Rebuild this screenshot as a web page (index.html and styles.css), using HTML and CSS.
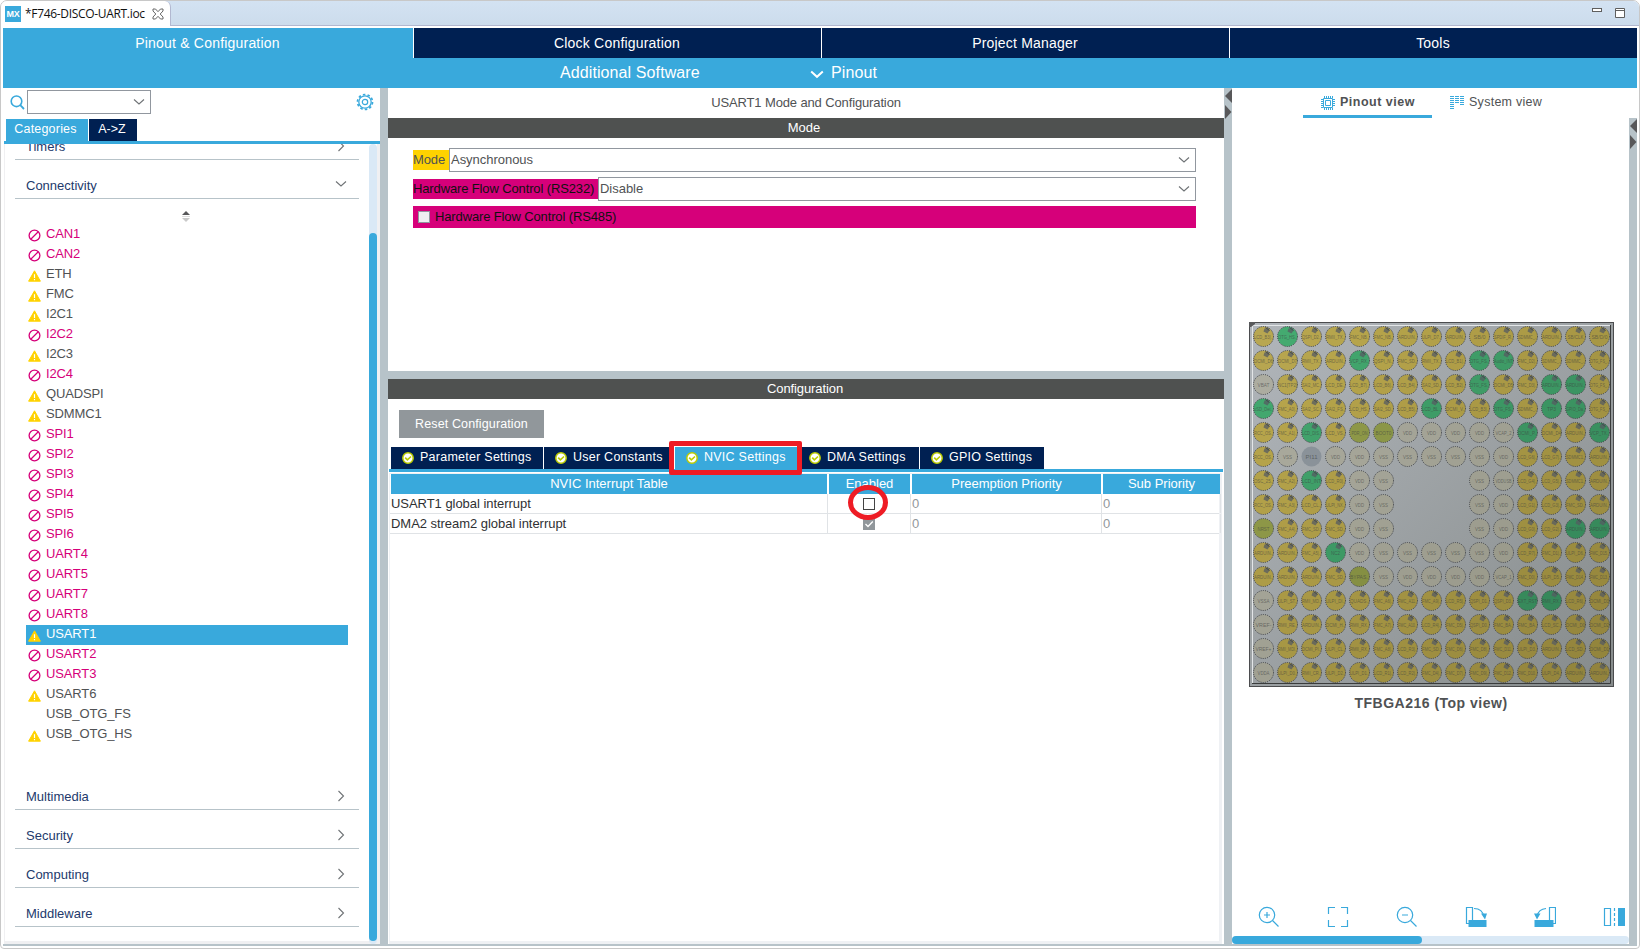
FILE: index.html
```html
<!DOCTYPE html>
<html lang="en">
<head>
<meta charset="utf-8">
<title>F746-DISCO-UART.ioc</title>
<link rel="stylesheet" href="styles.css">
</head>
<body>
<svg class="defs" width="0" height="0">
  <symbol id="ban" viewBox="0 0 13 13"><circle cx="6.500" cy="6.500" r="5.400" fill="none" stroke="#d6007a" stroke-width="1.300"/><path d="M3 10L10 3" stroke="#d6007a" stroke-width="1.200"/></symbol>
  <symbol id="warn" viewBox="0 0 13 12"><path d="M6.500 .8L12.400 11.200H.6Z" fill="#ffd200" stroke="#ffd200" stroke-linejoin="round"/><path d="M6.500 4.200V8M6.500 9V10.300" stroke="#fff" stroke-width="1.200"/></symbol>
  <symbol id="ok" viewBox="0 0 12 12"><circle cx="6" cy="6" r="5.200" fill="#fff" stroke="#bbcc00" stroke-width="1.500"/><path d="M3.200 5.600L5.400 7.900L9 4.500" fill="none" stroke="#bbcc00" stroke-width="1.600"/></symbol>
  <symbol id="down" viewBox="0 0 12 8"><path d="M1 1.500L6 6L11 1.500" fill="none" stroke="#6f7376" stroke-width="1.100"/></symbol>
  <symbol id="right" viewBox="0 0 8 12"><path d="M1.500 1L6.500 6L1.500 11" fill="none" stroke="#6f7376" stroke-width="1.100"/></symbol>
  <symbol id="arrows" viewBox="0 0 8 32"><path d="M8 1V15L1 8Z" fill="#58585a"/><path d="M1 17V31L7.500 24Z" fill="#58585a"/></symbol>
</svg>
<div class="window">
  <header class="strip">
    <div class="file-tab">
      <span class="mx">MX</span><span class="file-name">*F746-DISCO-UART.ioc</span>
      <svg class="close" width="12" height="12" viewBox="0 0 12 12"><path d="M1 1H3.500L6 3.700L8.500 1H11V3L8.200 6L11 9V11H8.500L6 8.300L3.500 11H1V9L3.800 6L1 3Z" fill="#fff" stroke="#666" stroke-width="1"/></svg>
    </div>
    <div class="win-buttons">
      <svg width="10" height="11"><rect x=".5" y=".5" width="9" height="3" fill="#fff" stroke="#5f5f5f"/></svg>
      <svg width="10" height="11"><path d="M.5 .5H9.500V9.500H.5ZM.5 2.500H9.500" fill="#fff" stroke="#5f5f5f"/></svg>
    </div>
  </header>
  <div class="app">
    <nav class="main-tabs"><span class="active">Pinout &amp; Configuration</span><span>Clock Configuration</span><span>Project Manager</span><span>Tools</span></nav>
    <div class="sub-bar">
      <span class="software">Additional Software</span>
      <svg width="14" height="9" viewBox="0 0 14 9"><path d="M1.200 1.500L7 6.800L12.800 1.500" fill="none" stroke="#fff" stroke-width="2"/></svg>
      <span>Pinout</span>
    </div>
    <main class="body">
      <aside class="left">
        <div class="search">
          <svg width="15" height="15" viewBox="0 0 15 15"><circle cx="6.500" cy="6.300" r="5.300" fill="none" stroke="#39a9dc" stroke-width="1.600"/><path d="M10.300 10.200L14 14" stroke="#39a9dc" stroke-width="1.800"/></svg>
          <div class="combo search-box"><svg width="12" height="8"><use href="#down"/></svg></div>
          <svg class="gear" width="18" height="18" viewBox="0 0 18 18"><circle cx="9" cy="9" r="6.200" fill="none" stroke="#39a9dc" stroke-width="1.300"/><circle cx="9" cy="9" r="7.500" fill="none" stroke="#39a9dc" stroke-width="1.700" stroke-dasharray="2.500 2.212"/><circle cx="9" cy="9" r="2.700" fill="none" stroke="#39a9dc" stroke-width="1.200"/></svg>
        </div>
        <div class="cat-tabs"><span class="active">Categories</span><span class="az">A-&gt;Z</span></div>
        <div class="scroll">
          <div class="categories">
            <div class="cat clipped"><span>Timers</span><svg width="8" height="12"><use href="#right"/></svg></div>
            <div class="cat"><span>Connectivity</span><svg class="open" width="12" height="8"><use href="#down"/></svg></div>
            <div class="sort"><svg width="8" height="11" viewBox="0 0 8 11"><path d="M0 4H8L4 0Z" fill="#58585a"/><path d="M0 7H8L4 11Z" fill="#c9c9c9"/><path d="M0 5.500H8" stroke="#ddd"/></svg></div>
            <ul class="list" id="peripherals"></ul>
            <div class="cat"><span>Multimedia</span><svg width="8" height="12"><use href="#right"/></svg></div>
            <div class="cat"><span>Security</span><svg width="8" height="12"><use href="#right"/></svg></div>
            <div class="cat"><span>Computing</span><svg width="8" height="12"><use href="#right"/></svg></div>
            <div class="cat"><span>Middleware</span><svg width="8" height="12"><use href="#right"/></svg></div>
          </div>
          <div class="track"><div class="thumb"></div></div>
        </div>
      </aside>
      <div class="divider"></div>
      <section class="center">
        <h1>USART1 Mode and Configuration</h1>
        <h2>Mode</h2>
        <div class="mode">
          <div class="field"><label class="yellow">Mode</label><div class="combo">Asynchronous<svg width="12" height="8"><use href="#down"/></svg></div></div>
          <div class="field"><label class="pink">Hardware Flow Control (RS232)</label><div class="combo">Disable<svg width="12" height="8"><use href="#down"/></svg></div></div>
          <div class="check-row"><i></i>Hardware Flow Control (RS485)</div>
        </div>
        <div class="h-divider"></div>
        <h2 class="conf-title">Configuration</h2>
        <div class="config">
          <div class="reset">Reset Configuration</div>
          <div class="set-tabs">
            <span class="t1"><svg><use href="#ok"/></svg>Parameter Settings</span>
            <span class="t2"><svg><use href="#ok"/></svg>User Constants</span>
            <span class="t3 active"><svg><use href="#ok"/></svg>NVIC Settings<b class="mark-box"></b></span>
            <span class="t4"><svg><use href="#ok"/></svg>DMA Settings</span>
            <span class="t5"><svg><use href="#ok"/></svg>GPIO Settings</span>
          </div>
          <div class="table-wrap">
            <div class="thead"><span>NVIC Interrupt Table</span><span>Enabled</span><span>Preemption Priority</span><span>Sub Priority</span></div>
            <div class="trow"><span>USART1 global interrupt</span><span class="chk"><i class="box"></i><b class="mark-ring"></b></span><span class="dim">0</span><span class="dim">0</span></div>
            <div class="trow"><span>DMA2 stream2 global interrupt</span><span class="chk"><svg width="12" height="12"><rect width="12" height="12" fill="#91979b"/><path d="M2.500 6L5 8.500L9.800 3.500" fill="none" stroke="#fff" stroke-width="1.300"/></svg></span><span class="dim">0</span><span class="dim">0</span></div>
          </div>
        </div>
      </section>
      <div class="divider"><svg width="8" height="32"><use href="#arrows"/></svg></div>
      <section class="right">
        <div class="view-tabs">
          <div class="view on"><svg width="14" height="14" viewBox="0 0 14 14" fill="none" stroke="#39a9dc"><path d="M2.500 2.500H11.500V11.500H2.500ZM4.500 4.500H9.500V9.500H4.500Z"/><path d="M3.500 0V2M5.500 0V2M7.500 0V2M9.500 0V2M11.500 0V2M3.500 12V14M5.500 12V14M7.500 12V14M9.500 12V14M11.500 12V14M0 3.500H2M0 5.500H2M0 7.500H2M0 9.500H2M0 11.500H2M12 3.500H14M12 5.500H14M12 7.500H14M12 9.500H14"/></svg><span>Pinout view</span></div>
          <div class="view"><svg width="14" height="14" viewBox="0 0 14 14" fill="none" stroke="#39a9dc"><path d="M0 .5H4M0 2.500H4M0 4.500H4M0 6.500H4M0 8.500H4M0 10.500H4M0 12.500H4M5 .5H9M5 2.500H9M5 4.500H9M5 6.500H9M10 .5H14M10 2.500H14M10 4.500H14M10 6.500H14M10 8.500H14" stroke-width="1.100"/></svg><span>System view</span></div>
        </div>
        <div class="canvas-row">
          <div class="canvas">
            <svg class="chip" id="chip" width="365" height="365" viewBox="0 0 365 365">
              <defs><linearGradient id="die" x1="0" y1="0" x2="1" y2="1"><stop offset="0" stop-color="#b1b6bb"/><stop offset="1" stop-color="#868b8b"/></linearGradient></defs>
              <rect x=".5" y=".5" width="364" height="364" fill="url(#die)" stroke="#4b4c4e"/>
              <path d="M3.500 361V3.500H361" fill="none" stroke="#e3e6e8"/>
              <path d="M3 361.500H361.500V3" fill="none" stroke="#3a3c3c"/>
              <path d="M0 0H6V2L2 5H0Z" fill="#58595b"/>
              <g id="balls"></g>
            </svg>
            <p class="package">TFBGA216 (Top view)</p>
            <div class="tools">
              <svg viewBox="0 0 22 22"><circle cx="9" cy="9" r="7.700"/><path d="M14.500 14.500L20.500 20.500M9 6V12M6 9H12"/></svg>
              <svg viewBox="0 0 22 22"><path d="M1.500 8V1.500H8M14 1.500H20.500V8M20.500 14V20.500H14M8 20.500H1.500V14"/></svg>
              <svg viewBox="0 0 22 22"><circle cx="9" cy="9" r="7.700"/><path d="M14.500 14.500L20.500 20.500M6 9H12"/></svg>
              <svg viewBox="0 0 22 22"><path d="M1.500 1.500H7.500V17.500H1.500Z"/><path class="solid" d="M3.500 14H21.500V21H3.500ZM16 7.500H22L20 13.500Z"/><path d="M9 2.500C14 2.500 18 5 19 11"/></svg>
              <svg viewBox="0 0 22 22"><path d="M15.500 1.500H21.500V17.500H15.500Z"/><path class="solid" d="M.5 14H19.500V21H.5ZM0 7.500H6.500L3 13.500Z"/><path d="M12 2.500C7 3 4 6 3 10"/></svg>
              <svg viewBox="0 0 22 22"><path d="M1.500 2.500H7.500V19.500H1.500Z"/><path d="M11.500 2V20" stroke-dasharray="3 2"/><path class="solid" d="M15 2H22V20H15Z"/></svg>
            </div>
            <div class="h-track"><div class="h-thumb"></div></div>
          </div>
          <div class="divider"><svg width="8" height="32"><use href="#arrows"/></svg></div>
        </div>
      </section>
    </main>
    <div class="foot"></div>
  </div>
</div>
<script src="app.js"></script>
</body>
</html>
```
FILE: styles.css
```css
* { box-sizing: border-box; }
body { margin: 0; font: 13px "Liberation Sans", Arial, sans-serif; letter-spacing: -0.13px; color: #505254; }
.defs { position: absolute; }
svg { display: block; flex: none; }
span { white-space: nowrap; }
.window { width: 1640px; height: 949px; display: flex; flex-direction: column; overflow: hidden; background: #fff; border: 1px solid #c8c8c8; border-radius: 7px 7px 4px 4px; }
.strip { height: 25px; flex: none; display: flex; justify-content: space-between; background: linear-gradient(#d3e2f2, #ccdcec); border-bottom: 1px solid #b2b8d0; }
.file-tab { width: 170px; height: 25px; display: flex; align-items: center; padding: 1px 0 0 4px; background: #fff; border-right: 1px solid #b2b8d0; border-radius: 5px 6px 0 0; }
.mx { width: 16px; height: 16px; background: #39a9dc; color: #fff; font: bold 9px/16px "Liberation Sans", sans-serif; text-align: center; }
.file-name { width: 121px; margin-left: 4px; font: 12px "Open Sans", "Noto Sans", sans-serif; letter-spacing: -0.32px; color: #111; padding-bottom: 2px; }
.close { margin-left: 6px; }
.win-buttons { display: flex; gap: 13px; padding: 7px 14px 0 0; }

.app { flex: 1; min-height: 0; display: flex; flex-direction: column; padding: 2px 2px 0; }
.main-tabs { height: 30px; flex: none; display: grid; grid-template-columns: 410px 407px 407px 407px; gap: 1px; }
.main-tabs span { background: #002052; color: #fff; font-size: 14px; letter-spacing: .2px; line-height: 31px; height: 30px; text-align: center; padding-right: 1px; }
.main-tabs .active { background: #39a9dc; }
.sub-bar { height: 30px; flex: none; display: flex; align-items: center; background: #39a9dc; color: #fff; font-size: 16px; letter-spacing: .1px; padding-left: 557px; }
.software { width: 250px; }
.sub-bar svg { margin: 3px 7px 0 0; }
.body { height: 856px; flex: none; display: flex; }
.foot { height: 2px; flex: none; background: #b7c3c9; width: 1634px; }

.left { width: 377px; flex: none; display: flex; flex-direction: column; }
.search { height: 31px; display: flex; align-items: flex-start; padding: 7px 6px 0 7px; }
.combo { height: 24px; border: 1px solid #91979f; display: flex; align-items: center; justify-content: space-between; background: #fff; padding: 0 5px 0 1px; }
.search-box { width: 124px; margin: -5px 0 0 2px; justify-content: flex-end; }
.gear { margin: -2px 0 0 auto; }
.cat-tabs { height: 25px; display: flex; gap: 1px; padding-left: 2px; border-bottom: 3px solid #39a9dc; margin-left: 1px; font-size: 12.5px; letter-spacing: .05px; line-height: 20px; color: #fff; text-align: center; }
.cat-tabs span { background: #002052; width: 48px; height: 22px; padding-right: 2px; }
.cat-tabs .active { background: #39a9dc; width: 82px; letter-spacing: .2px; padding-right: 3px; }
.scroll { flex: 1; min-height: 0; display: flex; margin-left: 1px; border: solid #f0f0f2; border-width: 0 3px 3px 1px; }
.categories { width: 364px; padding-left: 10px; overflow: hidden; }
.cat { width: 344px; height: 39px; display: flex; align-items: center; justify-content: space-between; border-bottom: 1px solid #b7c3c9; padding: 12px 14px 0 11px; letter-spacing: 0; }
.cat span { color: #233a6c; }
.cat.clipped { margin-top: -23px; }
.cat svg { margin-top: -1px; }
.cat svg.open { margin-right: -2px; margin-top: -2px; }
.sort { height: 26px; padding: 12px 0 0 167px; }
.list { list-style: none; margin: 0 0 26px 11px; padding: 0; width: 322px; }
.list li { height: 20px; display: flex; align-items: center; padding: 0 0 2px 2px; line-height: 18px; }
.list .ico { width: 18px; }
.list .ico svg { margin: 2px 0 0 -.5px; }
.list .ico svg.w { margin: 4px 0 0; }
.list .bad { color: #d6007a; }
.list .sel { background: #39a9dc; color: #fff; }
.track { width: 8px; background: #dae9f6; border-radius: 4px; padding-top: 89px; margin-bottom: -3px; }
.thumb { height: 708px; background: #39a9dc; border-radius: 4px; }
.divider { width: 8px; flex: none; background: #b7c3c9; }

.center { width: 836px; flex: none; display: flex; flex-direction: column; }
h1 { margin: 0; height: 30px; font: 13px/30px "Liberation Sans", sans-serif; text-align: center; }
h2 { margin: 0; height: 20px; flex: none; background: #4f5150; color: #fff; font: 13px/19px "Liberation Sans", sans-serif; text-align: center; letter-spacing: 0; padding-right: 4px; }
.conf-title { padding-right: 2px; letter-spacing: -.1px; }
.mode { height: 233px; flex: none; padding: 10px 28px 0 25px; }
.field { height: 24px; display: flex; align-items: center; margin-bottom: 5px; }
.field label { height: 20px; line-height: 19px; flex: none; }
.field .combo { flex: 1; line-height: 18px; letter-spacing: -.03px; }
.yellow { width: 36px; background: #ffd200; }
.pink { width: 185px; background: #d6007a; color: #111; }
.check-row { height: 22px; background: #d6007a; color: #111; display: flex; align-items: center; gap: 5px; padding: 0 0 1px 5px; }
.check-row i { width: 12px; height: 12px; margin-top: 1px; background: #f0f0f2; border: 1px solid #91979f; }
.h-divider { height: 8px; flex: none; background: #b7c3c9; }
.config { flex: 1; min-height: 0; display: flex; flex-direction: column; padding: 11px 1px 0; }
.reset { width: 145px; height: 28px; flex: none; margin-left: 10px; background: #91979b; color: #fff; font-size: 12.5px; line-height: 29px; text-align: center; letter-spacing: .12px; }
.set-tabs { height: 34px; flex: none; display: flex; gap: 1px; padding: 9px 0 0 2px; border-bottom: 3px solid #39a9dc; }
.set-tabs span { position: relative; height: 22px; display: flex; align-items: center; gap: 6px; padding: 0 0 2px 11px; background: #002052; color: #fff; font-size: 12.5px; letter-spacing: .25px; }
.set-tabs svg { width: 12px; height: 12px; margin-top: 1px; }
.t1 { width: 152px; } .t2 { width: 130px; } .t3 { width: 122px; } .t4 { width: 121px; } .t5 { width: 124px; }
.set-tabs .active { background: #39a9dc; }
.mark-box { position: absolute; z-index: 2; left: -6px; top: -6px; width: 133px; height: 34px; border: 5px solid #ee1c25; border-radius: 2px; }
.table-wrap { flex: 1; margin: 1px 1px 0 0; border: solid #eff1f4; border-width: 1px 3px 3px 1px; }
.thead, .trow { display: grid; }
.thead { grid-template-columns: 436px 81px 189px 117px; gap: 2px; padding-left: 1px; }
.thead span { height: 20px; background: #39a9dc; color: #fff; line-height: 19px; text-align: center; letter-spacing: 0; }
.trow { grid-template-columns: 438px 83px 191px 119px; height: 20px; border-bottom: 1px solid #e0e3e6; color: #2f3133; line-height: 20px; letter-spacing: -.04px; }
.trow > span { height: 19px; border-right: 1px solid #e0e3e6; padding-left: 1px; }
.trow .dim { color: #91979b; }
.trow .chk { position: relative; padding: 4px 0 0 35px; }
.box { display: block; width: 12px; height: 12px; border: 1px solid #444; }
.mark-ring { position: absolute; z-index: 2; left: 20px; top: -9px; width: 40px; height: 35px; border: 5px solid #ee1c25; border-radius: 50%; }

.right { width: 405px; flex: none; display: flex; flex-direction: column; }
.view-tabs { height: 30px; flex: none; display: flex; padding-left: 71px; }
.view { width: 129px; display: flex; align-items: center; gap: 5px; padding: 2px 0 0 18px; font-size: 12.5px; letter-spacing: .27px; border-bottom: 3px solid transparent; }
.view.on { font-weight: bold; letter-spacing: .5px; border-color: #39a9dc; }
.view span { padding-bottom: 1px; }
.canvas-row { flex: 1; min-height: 0; display: flex; }
.canvas { width: 397px; display: flex; flex-direction: column; overflow: hidden; }
.chip { margin: 204px 0 0 17px; }
.package { margin: 7px 0 0 6px; width: 386px; text-align: center; font: bold 14px/18px "Liberation Sans", sans-serif; letter-spacing: .5px; }
.tools { display: flex; gap: 47px; margin-top: auto; padding: 0 0 8px 26px; }
.tools svg { width: 22px; height: 22px; fill: none; stroke: #39a9dc; stroke-width: 1.2; }
.tools .solid { fill: #39a9dc; stroke: none; }
.h-track { height: 8px; flex: none; background: #dae9f6; border-radius: 4px; }
.h-thumb { width: 190px; height: 8px; background: #39a9dc; border-radius: 4px; }
.ball text { font: 5px "Liberation Sans", sans-serif; letter-spacing: 0; text-anchor: middle; fill: #3c3e40; fill-opacity: .6; }
.ball circle { stroke: #3c3e42; stroke-width: 1; stroke-dasharray: 1 1.2; }
.ball .plain { stroke: none; }
```
FILE: app.js
```js
const peripherals = ['!CAN1', '!CAN2', '?ETH', '?FMC', '?I2C1', '!I2C2', '?I2C3', '!I2C4', '?QUADSPI', '?SDMMC1',
  '!SPI1', '!SPI2', '!SPI3', '!SPI4', '!SPI5', '!SPI6', '!UART4', '!UART5', '!UART7', '!UART8',
  '?USART1', '!USART2', '!USART3', '?USART6', ' USB_OTG_FS', '?USB_OTG_HS'];
document.getElementById('peripherals').innerHTML = peripherals.map(function (p) {
  const kind = p[0], name = p.slice(1);
  const icon = kind === '!' ? '<svg width="13" height="13"><use href="#ban"/></svg>'
    : kind === '?' ? '<svg class="w" width="13" height="12"><use href="#warn"/></svg>' : '';
  const cls = name === 'USART1' ? 'sel' : kind === '!' ? 'bad' : '';
  return '<li class="' + cls + '"><span class="ico">' + icon + '</span><span>' + name + '</span></li>';
}).join('');

// Prefixes: * assigned, ~ power, % control pin, @ unassigned, - no ball.
const rows = [
  'LCD_B3|. *OTG_HS. QSPI_D2. RMII_TX. FMC_NB. FMC_NB. ARDUIN. ULPI_D7. ARDUIN. SB/0 SPDIF_R. SDMMC_. ARDUIN. SB/CLK SB/D/0',
  'DCMI_D6 DCMI_D7 RMII_TX. ARDUIN. *VCP_RX. QSPI_N. FMC_SD. RMII_TX. LCD_B1|. *OTG_FS. *Audio_INT FMC_D2|. SDMMC_. SDMMC_. OTG_FS_.',
  '~VBAT NC1[TP2] SAI2_MC. LCD_DE. LCD_B7|. LCD_B6|. LCD_B4|. SAI2_SD. LCD_B2|. *OTG_FS. DCMI_D5 FMC_D3|. *ARDUIN. *ARDUIN. OTG_FS_.',
  '*uSD_Det. FMC_A0|. SAI2_SC. SAI2_FS. LCD_HS. SAI2_SD. LCD_B5|. *LCD_BL. DCMI_V. LCD_B3|. *OTG_FS. SDMMC_. *TP3 *GPIO_Da. OTG_FS_.',
  'RCC_OS. FMC_A1|. *LCD_DIS. LCD_VS. %PDR_ON %BOOT0 ~VDD ~VDD ~VDD ~VDD ~VCAP_2 *DCMI_P. DCMI_D4 ARDUIN. *VCP_TX.',
  'RCC_OS. ~VSS @PI11 ~VDD ~VDD ~VSS ~VSS ~VSS ~VSS ~VSS ~VDD LCD_G6|. LCD_G7|. SDMMC1. ARDUIN.',
  'OSC_25. FMC_A2|. *LCD_INT LCD_R0|. ~VDD ~VSS - - - ~VSS ~VDDUSB LCD_G4|. LCD_G5|. SDMMC1. ARDUIN.',
  'RCC_OS. FMC_A3|. LCD_CL. ULPI_NX. ~VDD ~VSS - - - ~VSS ~VDD LCD_G1|. LCD_G3|. FMC_SD. ARDUIN.',
  '%NRST FMC_A4|. FMC_SD. FMC_SD. ~VDD ~VSS - - - ~VSS ~VDD LCD_G0|. LCD_G2|. *ARDUIN. *ARDUIN.',
  'ARDUIN. ARDUIN. FMC_A5|. *NC2 ~VDD ~VSS ~VSS ~VSS ~VSS ~VSS ~VDD LCD_R7|. FMC_D1|. ULPI_D6. FMC_D15.',
  'ARDUIN. ARDUIN. ARDUIN. FMC_SD. %BYPAS. ~VSS ~VDD ~VDD ~VDD ~VDD ~VCAP_1 FMC_D0|. ULPI_D5. FMC_D14. FMC_D13.',
  '~VSSA ULPI_ST. RMII_MD. ULPI_DI. QUADS. FMC_A6|. FMC_A11. FMC_A9|. LCD_R5|. QSPI_D1. QSPI_D3. *EXT_RST *RMII_RX. LCD_R6|. DCMI_D3',
  '~VREF- RMII_RE. ARDUIN. DCMI_H. RMII_RX. FMC_A7|. FMC_A10. LCD_R4|. FMC_D5|. QSPI_D0. FMC_BA. FMC_BA. LCD_SC. DCMI_D0 DCMI_D2',
  '~VREF+ RMII_MDI. DCMI_PI. ULPI_CL. RMII_RX. FMC_A8|. LCD_R3|. FMC_SD. FMC_D6|. FMC_D8|. FMC_D11. ULPI_D3. ARDUIN. LCD_SD. DCMI_D1',
  '~VDDA ULPI_D0. RMII_CR. ULPI_D2. ULPI_D1. LCD_R1|. LCD_R2|. FMC_D4|. FMC_D7|. FMC_D9|. FMC_D12. FMC_D10. ULPI_D4. ARDUIN. ARDUIN.'
];
const hues = { '*': [146, 43, 47], '~': [57, 7, 66], '%': [68, 36, 47], '@': [208, 7, 60], '': [50, 42, 52] };
document.getElementById('balls').innerHTML = rows.map(function (row, r) {
  return row.split(' ').map(function (cell, c) {
    if (cell === '-') return '';
    const kind = '*~%@'.includes(cell[0]) ? cell[0] : '';
    const name = (kind ? cell.slice(1) : cell).replace(/\.$/, '..');
    const hue = hues[kind], light = hue[2] - (r + c) * 0.42;
    const fill = 'hsl(' + hue[0] + ',' + hue[1] + '%,' + light + '%)';
    const pin = kind === '' || kind === '*'
      ? '<path d="M1 -8L5 -9L6 -6L4 -3L0 -5Z" fill="#565b62" fill-opacity=".75"/><path d="M2 -9L6 -6" stroke="#44494f"/>' : '';
    const width = name.length > 6 ? 19 : name.length > 4 ? 16 : name.length === 4 ? 12 : 9;
    return '<g class="ball" transform="translate(' + (14.5 + c * 24) + ' ' + (14.5 + r * 24) + ')"><circle r="10"' +
      (kind === '@' ? ' class="plain"' : '') + ' fill="' + fill + '"/>' + pin +
      '<text y="2" textLength="' + width + '" lengthAdjust="spacingAndGlyphs">' + name + '</text></g>';
  }).join('');
}).join('');
```
